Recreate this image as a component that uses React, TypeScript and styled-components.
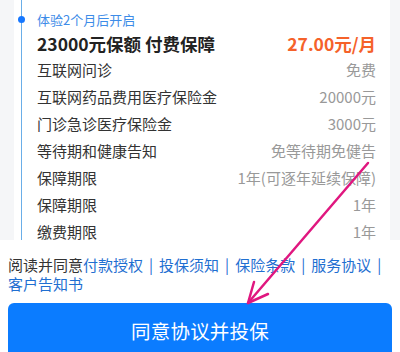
import React from "react";
import styled, { createGlobalStyle } from "styled-components";

const Global = createGlobalStyle`
  html, body { margin: 0; padding: 0; background: #ffffff; }
  body { font-family: "Noto Sans CJK SC", "Noto Sans", sans-serif; -webkit-font-smoothing: antialiased; }
  * { box-sizing: border-box; }
`;

const Page = styled.div`
  position: relative;
  width: 400px;
  height: 352px;
  overflow: hidden;
  background: #ffffff;
`;

const TopArea = styled.div`
  height: 240px;
  background: #f5f6f8;
  padding: 0 10px 0 14px;
`;

const Card = styled.div`
  height: 100%;
  background: #ffffff;
  padding: 0 14px 0 7px;
`;

const Timeline = styled.div`
  position: relative;
  height: 100%;
  border-left: 1.5px solid #6aaee8;
  padding: 9px 0 0 15px;
`;

const Dot = styled.span`
  position: absolute;
  left: -4.5px;
  top: 16px;
  width: 7px;
  height: 7px;
  border-radius: 50%;
  background: #1677ff;
`;

const Stage = styled.div`
  font-size: 13px;
  line-height: 21px;
  color: #3d8ce8;
`;

const TitleRow = styled.div`
  display: flex;
  justify-content: space-between;
  align-items: center;
  height: 26px;
  font-size: 17.5px;
  font-weight: 700;
  color: #222222;
`;

const Price = styled.span`
  color: #f5622a;
  font-weight: 700;
  font-size: 17.5px;
`;

const Row = styled.div`
  display: flex;
  justify-content: space-between;
  align-items: center;
  height: 27px;
  font-size: 15px;
`;

const Label = styled.span`
  color: #333333;
`;

const Value = styled.span`
  color: #999999;
`;

const Bottom = styled.div`
  padding: 15px 8px 0 8px;
`;

const Agreement = styled.div`
  font-size: 15px;
  line-height: 19px;
  color: #333333;
`;

const Link = styled.span`
  color: #1f6fd1;
`;

const Sep = styled.span`
  color: #1f6fd1;
  margin: 0 6px;
`;

const Button = styled.div`
  margin-top: 10px;
  height: 54px;
  border-radius: 6px;
  background: #0b7cff;
  color: #ffffff;
  font-size: 19.5px;
  display: flex;
  align-items: center;
  justify-content: center;
  letter-spacing: 0.2px;
`;

const ArrowLayer = styled.svg`
  position: absolute;
  left: 0;
  top: 0;
  pointer-events: none;
`;

const rows: [string, string][] = [
  ["互联网问诊", "免费"],
  ["互联网药品费用医疗保险金", "20000元"],
  ["门诊急诊医疗保险金", "3000元"],
  ["等待期和健康告知", "免等待期免健告"],
  ["保障期限", "1年(可逐年延续保障)"],
  ["保障期限", "1年"],
  ["缴费期限", "1年"],
];

const links = ["付款授权", "投保须知", "保险条款", "服务协议", "客户告知书"];

export default function App() {
  return (
    <Page>
      <Global />
      <TopArea>
        <Card>
          <Timeline>
            <Dot />
            <Stage>体验2个月后开启</Stage>
            <TitleRow>
              <span>23000元保额 付费保障</span>
              <Price>27.00元/月</Price>
            </TitleRow>
            {rows.map(([l, v], i) => (
              <Row key={i}>
                <Label>{l}</Label>
                <Value>{v}</Value>
              </Row>
            ))}
          </Timeline>
        </Card>
      </TopArea>
      <Bottom>
        <Agreement>
          阅读并同意
          {links.map((t, i) => (
            <React.Fragment key={t}>
              <Link>{t}</Link>
              {i < links.length - 1 && <Sep>|</Sep>}
            </React.Fragment>
          ))}
        </Agreement>
        <Button>同意协议并投保</Button>
      </Bottom>
      <ArrowLayer width="400" height="352" viewBox="0 0 400 352">
        <g stroke="#e0177f" strokeWidth="2.5" strokeLinecap="round" fill="none">
          <line x1="368" y1="163" x2="248" y2="303" />
          <polyline points="254,282 248,303 268,294" strokeLinejoin="round" />
        </g>
      </ArrowLayer>
    </Page>
  );
}
